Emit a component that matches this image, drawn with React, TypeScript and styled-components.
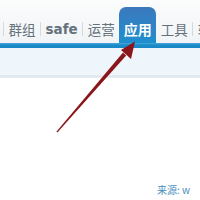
import React from "react";
import styled, { createGlobalStyle } from "styled-components";

const Global = createGlobalStyle`
  html, body { margin: 0; padding: 0; background: #ffffff; }
  body { width: 200px; height: 200px; overflow: hidden; position: relative; }
`;

const Page = styled.div`
  width: 200px;
  height: 200px;
  overflow: hidden;
  position: relative;
  font-family: "Noto Sans CJK SC", "DejaVu Sans", sans-serif;
`;

const Header = styled.div`
  height: 43px;
  background: linear-gradient(#fbfcfc, #f1f4f6);
  display: flex;
  align-items: flex-end;
  gap: 4.5px;
  padding-left: 3px;
  white-space: nowrap;
  overflow: hidden;
`;

const Item = styled.div<{ $bold?: boolean }>`
  height: 36px;
  box-sizing: border-box;
  padding-top: 7px;
  display: flex;
  align-items: center;
  font-size: 13.5px;
  color: #65727c;
  font-weight: ${(p) => (p.$bold ? 700 : 400)};
  font-family: ${(p) =>
    p.$bold ? '"DejaVu Sans", sans-serif' : '"Noto Sans CJK SC", sans-serif'};
  flex-shrink: 0;
`;

const Sep = styled.div`
  height: 36px;
  box-sizing: border-box;
  padding-top: 7px;
  display: flex;
  align-items: center;
  flex-shrink: 0;
  &::before {
    content: "";
    display: block;
    width: 1px;
    height: 14px;
    background: #d3dade;
  }
`;

const ActiveTab = styled.div`
  height: 36px;
  width: 37px;
  box-sizing: border-box;
  padding-top: 7px;
  display: flex;
  align-items: center;
  justify-content: center;
  border-radius: 7px 7px 0 0;
  background: linear-gradient(#3c78bd, #1f8fcf);
  color: #ffffff;
  font-weight: 700;
  font-size: 14px;
  flex-shrink: 0;
`;

const BlueBar = styled.div`
  height: 5px;
  background: linear-gradient(#49a8da, #1c8ccb 40%, #1a86c4);
`;

const SubBar = styled.div`
  height: 27px;
  background: #eef6fb;
  border-bottom: 3px solid #e2eaf0;
`;

const Content = styled.div`
  height: 122px;
  display: flex;
  flex-direction: column;
  justify-content: flex-end;
`;

const Source = styled.div`
  padding: 0 0 4px 157px;
  white-space: nowrap;
  font-size: 10px;
  line-height: 12px;
  color: #4a90bc;
  font-family: "Noto Sans CJK SC", sans-serif;
`;

const ArrowLayer = styled.svg`
  position: absolute;
  left: 0;
  top: 0;
  pointer-events: none;
`;

export default function App() {
  return (
    <Page>
      <Global />
      <Header>
        <Sep />
        <Item>群组</Item>
        <Sep />
        <Item $bold>safe</Item>
        <Sep />
        <Item>运营</Item>
        <ActiveTab>应用</ActiveTab>
        <Item>工具</Item>
        <Sep />
        <Item>软件</Item>
      </Header>
      <BlueBar />
      <SubBar />
      <Content>
        <Source>来源: w</Source>
      </Content>
      <ArrowLayer width="200" height="200" viewBox="0 0 200 200">
        <polygon
          points="56.4,131.7 57.4,132.5 126.2,55.6 123,52.6"
          fill="#8a161c"
        />
        <polygon points="135,41.5 121,50 131,59" fill="#8a161c" />
      </ArrowLayer>
    </Page>
  );
}
